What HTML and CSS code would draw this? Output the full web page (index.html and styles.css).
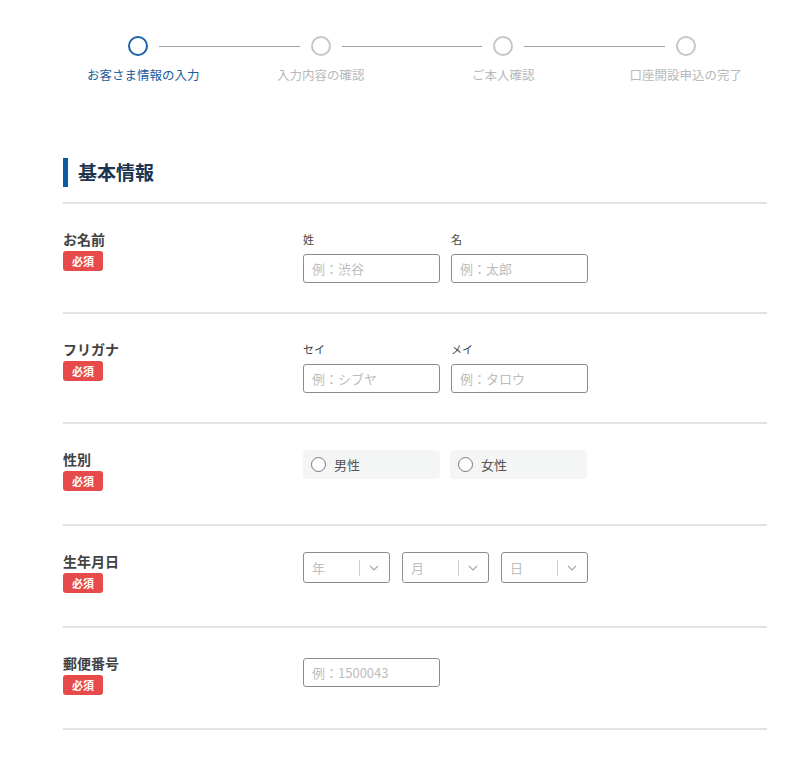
FILE: index.html
```html
<!DOCTYPE html>
<html lang="ja">
<head>
    <meta charset="UTF-8">
    <meta name="viewport" content="width=device-width, initial-scale=1.0">
    <title>お客さま情報の入力</title>
    <link rel="stylesheet" href="styles.css">
</head>
<body>
    <ol class="stepper">
        <li class="step active"><span class="step-dot"></span><span class="step-label">お客さま情報の入力</span></li>
        <li class="step"><span class="step-dot"></span><span class="step-label">入力内容の確認</span></li>
        <li class="step"><span class="step-dot"></span><span class="step-label">ご本人確認</span></li>
        <li class="step last"><span class="step-dot"></span><span class="step-label">口座開設申込の完了</span></li>
    </ol>

    <main class="container">
        <h2 class="section-title">基本情報</h2>

        <div class="form-row">
            <div class="row-label">
                <span class="label-text">お名前</span>
                <span class="required">必須</span>
            </div>
            <div class="row-fields">
                <div class="field">
                    <span class="sub-label">姓</span>
                    <input class="text-input" type="text" placeholder="例：渋谷">
                </div>
                <div class="field">
                    <span class="sub-label">名</span>
                    <input class="text-input" type="text" placeholder="例：太郎">
                </div>
            </div>
        </div>

        <div class="form-row">
            <div class="row-label">
                <span class="label-text">フリガナ</span>
                <span class="required">必須</span>
            </div>
            <div class="row-fields">
                <div class="field">
                    <span class="sub-label">セイ</span>
                    <input class="text-input" type="text" placeholder="例：シブヤ">
                </div>
                <div class="field">
                    <span class="sub-label">メイ</span>
                    <input class="text-input" type="text" placeholder="例：タロウ">
                </div>
            </div>
        </div>

        <div class="form-row">
            <div class="row-label">
                <span class="label-text">性別</span>
                <span class="required">必須</span>
            </div>
            <div class="row-fields radios">
                <label class="radio-box"><input type="radio" name="gender"><span>男性</span></label>
                <label class="radio-box"><input type="radio" name="gender"><span>女性</span></label>
            </div>
        </div>

        <div class="form-row">
            <div class="row-label">
                <span class="label-text">生年月日</span>
                <span class="required">必須</span>
            </div>
            <div class="row-fields selects">
                <div class="select-box">
                    <span class="select-value">年</span>
                    <span class="select-sep"></span>
                    <svg class="chevron" viewBox="0 0 10 6" width="10" height="6"><path d="M1 1l4 4 4-4" fill="none" stroke="#a8a8a8" stroke-width="1.2"/></svg>
                </div>
                <div class="select-box">
                    <span class="select-value">月</span>
                    <span class="select-sep"></span>
                    <svg class="chevron" viewBox="0 0 10 6" width="10" height="6"><path d="M1 1l4 4 4-4" fill="none" stroke="#a8a8a8" stroke-width="1.2"/></svg>
                </div>
                <div class="select-box">
                    <span class="select-value">日</span>
                    <span class="select-sep"></span>
                    <svg class="chevron" viewBox="0 0 10 6" width="10" height="6"><path d="M1 1l4 4 4-4" fill="none" stroke="#a8a8a8" stroke-width="1.2"/></svg>
                </div>
            </div>
        </div>

        <div class="form-row">
            <div class="row-label">
                <span class="label-text">郵便番号</span>
                <span class="required">必須</span>
            </div>
            <div class="row-fields">
                <input class="text-input postal" type="text" placeholder="例：1500043">
            </div>
        </div>
    </main>
</body>
</html>
```

FILE: styles.css
```css
* {
    margin: 0;
    padding: 0;
    box-sizing: border-box;
}

body {
    font-family: "Noto Sans CJK JP", "Noto Sans", sans-serif;
    background: #ffffff;
    color: #333333;
}

/* stepper */
.stepper {
    list-style: none;
    display: flex;
    padding: 36px 34px 0 47px;
}

.step {
    flex: 1;
    display: flex;
    flex-direction: column;
    align-items: center;
    position: relative;
}

.step::after {
    content: "";
    position: absolute;
    top: 10px;
    left: calc(50% + 21px);
    width: calc(100% - 42px);
    height: 1px;
    background: #a0a0a0;
}

.step.last::after {
    display: none;
}

.step-dot {
    width: 20px;
    height: 20px;
    border-radius: 50%;
    border: 2px solid #c6c6c6;
}

.step-label {
    margin-top: 10px;
    font-size: 12.5px;
    line-height: 18px;
    color: #b8b8b8;
}

.step.active .step-dot {
    border-color: #1b62a6;
}

.step.active .step-label {
    color: #1b5c9c;
    margin-left: 10px;
}

/* form */
.container {
    padding: 74px 44px 40px 63px;
}

.section-title {
    border-left: 5px solid #0d5aa7;
    padding-left: 10px;
    height: 29px;
    line-height: 28px;
    font-size: 19px;
    font-weight: 700;
    color: #1d3451;
    margin-bottom: 15px;
}

.form-row {
    display: flex;
    border-top: 2px solid #e2e2e2;
    padding: 26px 0 29px;
}

.form-row:last-child {
    border-bottom: 2px solid #e2e2e2;
}

.row-label {
    width: 240px;
    flex-shrink: 0;
    display: flex;
    flex-direction: column;
    align-items: flex-start;
    padding-bottom: 4px;
}

.label-text {
    font-size: 14px;
    font-weight: 700;
    line-height: 19px;
    color: #424242;
}

.required {
    margin-top: 2px;
    width: 40px;
    height: 20px;
    line-height: 20px;
    border-radius: 3px;
    background: #e64a4a;
    color: #ffffff;
    font-size: 11px;
    font-weight: 700;
    text-align: center;
}

.row-fields {
    display: flex;
    gap: 11px;
}

.field {
    display: flex;
    flex-direction: column;
}

.sub-label {
    font-size: 11px;
    line-height: 19px;
    color: #444444;
}

.text-input {
    margin-top: 5px;
    width: 137px;
    height: 29px;
    border: 1px solid #8c8c8c;
    border-radius: 3px;
    padding: 0 8px;
    font-family: inherit;
    font-size: 13px;
    color: #333333;
    outline: none;
}

.text-input::placeholder {
    color: #bdbdbd;
}

.text-input.postal {
    margin-top: 4px;
}

/* radios */
.radios {
    gap: 10px;
}

.radio-box {
    width: 137px;
    height: 29px;
    background: #f4f5f5;
    border-radius: 4px;
    display: flex;
    align-items: center;
    gap: 8px;
    padding-left: 8px;
    font-size: 13px;
    color: #555555;
}

.radio-box input {
    appearance: none;
    width: 15px;
    height: 15px;
    border: 1px solid #777777;
    border-radius: 50%;
    background: #ffffff;
    margin: 0;
}

/* selects */
.selects {
    gap: 12px;
}

.select-box {
    width: 87px;
    height: 31px;
    border: 1px solid #8c8c8c;
    border-radius: 3px;
    display: flex;
    align-items: center;
    padding-left: 8px;
}

.select-value {
    font-size: 13px;
    color: #bdbdbd;
    width: 47px;
}

.select-sep {
    width: 1px;
    height: 16px;
    background: #cccccc;
}

.chevron {
    margin-left: 9px;
}
```
